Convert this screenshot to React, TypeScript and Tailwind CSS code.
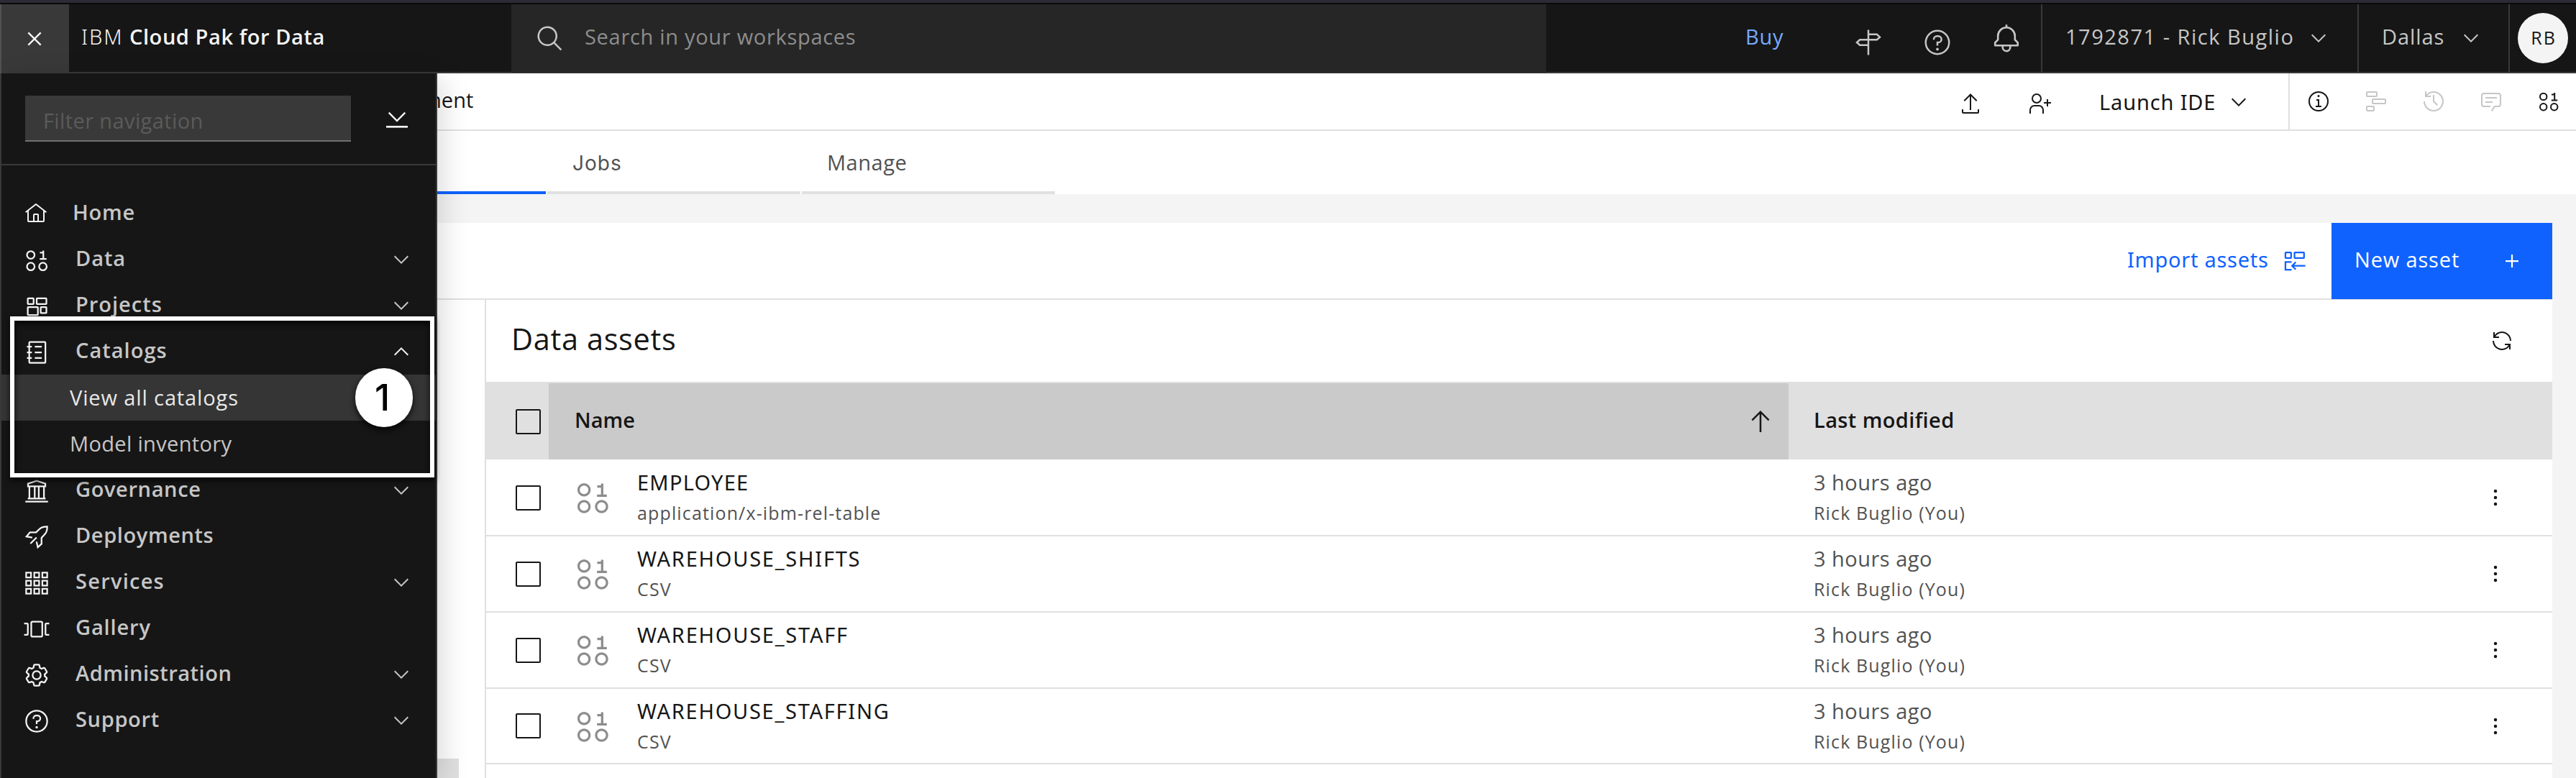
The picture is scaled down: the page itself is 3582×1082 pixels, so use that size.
import type { ReactNode } from "react";

type IconProps = { className?: string; children: ReactNode };

/* 32-unit icon drawn with filled shapes */
const Solid = ({ className = "", children }: IconProps) => (
  <svg viewBox="0 0 32 32" fill="currentColor" className={`shrink-0 ${className}`}>{children}</svg>
);

/* 32-unit icon drawn with 2-unit strokes */
const Line = ({ className = "", children }: IconProps) => (
  <svg viewBox="0 0 32 32" fill="none" stroke="currentColor" strokeWidth="2" className={`shrink-0 ${className}`}>{children}</svg>
);

const ChevronDown = ({ className = "" }: { className?: string }) => (
  <Solid className={`size-[32px] ${className}`}><path d="M16 22 6 12l1.4-1.4 8.6 8.6 8.6-8.6L26 12z" /></Solid>
);
const ChevronUp = ({ className = "" }: { className?: string }) => (
  <Solid className={`size-[32px] ${className}`}><path d="m16 10 10 10-1.4 1.4-8.6-8.6-8.6 8.6L6 20z" /></Solid>
);
const HomeIcon = () => (
  <Solid className="size-[32px]">
    <path d="M16.61 2.21a1.01 1.01 0 0 0-1.24 0L1 13.42l1.24 1.57L4 13.62V26a2 2 0 0 0 2 2H26a2 2 0 0 0 2-2V13.63L29.76 15 31 13.43ZM18 26H14V18h4Zm2 0V18a2 2 0 0 0-2-2H14a2 2 0 0 0-2 2v8H6V12.06l10-7.79 10 7.8V26Z" />
  </Solid>
);
const DataIcon = ({ className = "size-[36px]" }: { className?: string }) => (
  <Line className={className}>
    <circle cx="8.7" cy="9.4" r="4.7" />
    <circle cx="8.7" cy="23.7" r="4.7" />
    <circle cx="23.7" cy="23.7" r="4.7" />
    <path d="M20 6.6h4.4M24.2 4v10.5M19.8 14.4h8.4" />
  </Line>
);
const ProjectsIcon = () => (
  <Line className="size-[36px]">
    <rect x="5" y="6.2" width="7.2" height="7" rx=".6" />
    <rect x="16" y="6.2" width="12" height="7" rx=".6" />
    <rect x="5" y="17" width="12.5" height="9.8" rx=".6" />
    <rect x="21" y="17" width="7" height="7.4" rx=".6" />
  </Line>
);
const CatalogIcon = () => (
  <Line className="size-[36px]">
    <rect x="6.8" y="3.2" width="20" height="25.8" rx="1" />
    <path d="M4 9h6M4 16h6M4 23h6M13.7 9h8.6M13.7 16h8.6M13.7 23h8.6" />
  </Line>
);
const GovernanceIcon = () => (
  <Line className="size-[36px]">
    <path d="M5.3 10V6.8L16 3.2l10.7 3.6V10zM7 10v15M13.6 10v15M18.6 10v15M25 10v15M5 25.2h22M2 29h28" />
  </Line>
);
const RocketIcon = () => (
  <Line className="size-[36px]">
    <path d="M10.5 16.6 3.4 15.3l4.3-5.2h7.6l4.6-4.5C22.4 3.5 25.5 2.9 29 3c.1 3.4-.5 6.6-2.6 9L22 16.9v7.5l-4.6 4.2-1.6-7M15.900 16.400l-7.600 7.600" />
  </Line>
);
const ServicesIcon = () => (
  <Line className="size-[36px]">
    {[3, 13, 23].flatMap((y) => [3, 13, 23].map((x) => <rect key={`${x}-${y}`} x={x} y={y} width="6" height="6" />))}
  </Line>
);
const GalleryIcon = () => (
  <Line className="size-[36px]">
    <rect x="9.3" y="6.8" width="13.6" height="18.5" rx="1.5" />
    <path d="M.5 9h3.600a1 1 0 0 1 1 1v12a1 1 0 0 1-1 1H.5M31.500 9h-3.600a1 1 0 0 0-1 1v12a1 1 0 0 0 1 1h3.600" />
  </Line>
);
const SettingsIcon = () => (
  <Solid className="size-[36px]">
    <path d="M27,16.76c0-.25,0-.5,0-.76s0-.51,0-.77l1.920-1.680A2,2,0,0,0,29.3,11L26.940,7a2,2,0,0,0-1.730-1,2,2,0,0,0-.64.1l-2.430.82a11.350,11.350,0,0,0-1.310-.75l-.51-2.520a2,2,0,0,0-2-1.610H13.640a2,2,0,0,0-2,1.610l-.51,2.520a11.480,11.480,0,0,0-1.320.75L7.430,6.060A2,2,0,0,0,6.790,6,2,2,0,0,0,5.060,7L2.700,11a2,2,0,0,0,.41,2.510L5,15.240c0,.25,0,.5,0,.76s0,.51,0,.77L3.110,18.450A2,2,0,0,0,2.700,21L5.060,25a2,2,0,0,0,1.730,1,2,2,0,0,0,.64-.1l2.430-.82a11.350,11.350,0,0,0,1.310.75l.51,2.520a2,2,0,0,0,2,1.610h4.720a2,2,0,0,0,2-1.610l.51-2.520a11.480,11.480,0,0,0,1.320-.75l2.420.82a2,2,0,0,0,.64.1,2,2,0,0,0,1.730-1L29.300,21a2,2,0,0,0-.41-2.510ZM25.210,24l-3.430-1.160a8.860,8.860,0,0,1-2.710,1.570L18.360,28H13.640l-.71-3.550a9.360,9.360,0,0,1-2.700-1.570L6.790,24,4.430,20l2.720-2.400a8.900,8.900,0,0,1,0-3.130L4.430,12,6.790,8l3.430,1.160a8.860,8.860,0,0,1,2.710-1.570L13.640,4h4.720l.71,3.550a9.360,9.360,0,0,1,2.700,1.570L25.210,8,27.570,12l-2.720,2.400a8.900,8.900,0,0,1,0,3.130L27.570,20Z" />
    <circle cx="16" cy="16" r="5" fill="none" stroke="currentColor" strokeWidth="2" />
  </Solid>
);
const HelpIcon = ({ className = "size-[36px]" }: { className?: string }) => (
  <Solid className={className}>
    <circle cx="16" cy="16" r="13" fill="none" stroke="currentColor" strokeWidth="2" />
    <circle cx="16" cy="23.5" r="1.5" />
    <path d="M17 8h-1.500A4.490 4.490 0 0 0 11 12.500V13h2v-.5a2.500 2.500 0 0 1 2.500-2.500H17a2.500 2.500 0 0 1 0 5h-2v4.500h2V17a4.500 4.500 0 0 0 0-9z" />
  </Solid>
);

type NavItem = { label: string; icon: ReactNode; text: string; row?: string; chevron?: "up" | "down" };

const navTop: NavItem[] = [
  { label: "Data", icon: <DataIcon />, text: "tracking-[0.9px]", chevron: "down" },
  { label: "Projects", icon: <ProjectsIcon />, text: "tracking-[0.99px]", chevron: "down" },
  { label: "Catalogs", icon: <CatalogIcon />, text: "tracking-[1.03px]", row: "mb-[3px]", chevron: "up" },
];
const navBottom: NavItem[] = [
  { label: "Governance", icon: <GovernanceIcon />, text: "tracking-[0.63px]", row: "-mt-[2px]", chevron: "down" },
  { label: "Deployments", icon: <RocketIcon />, text: "tracking-[0.6px]" },
  { label: "Services", icon: <ServicesIcon />, text: "tracking-[1.25px]", chevron: "down" },
  { label: "Gallery", icon: <GalleryIcon />, text: "tracking-[0.87px]" },
  { label: "Administration", icon: <SettingsIcon />, text: "tracking-[0.52px]", chevron: "down" },
  { label: "Support", icon: <HelpIcon />, text: "tracking-[0.66px]", chevron: "down" },
];

function NavRow({ item }: { item: NavItem }) {
  return (
    <div className={`flex h-[64px] items-center pr-[32px] pl-[31px] ${item.row ?? ""}`}>
      <span className="mt-[8px] text-[#f4f4f4]">{item.icon}</span>
      <span className={`mt-[1px] ml-[36px] flex-1 font-semibold ${item.text}`}>{item.label}</span>
      {item.chevron === "down" && <ChevronDown className="mt-[6px]" />}
      {item.chevron === "up" && <ChevronUp className="mt-[6px] text-[#f4f4f4]" />}
    </div>
  );
}

function Header() {
  return (
    <header className="border-t-4 border-[#2b2a35] bg-[#161616] text-[#c6c6c6]">
      <div className="h-[2px] bg-[#0a0a0b]" />
      <div className="flex h-[96px] items-center border-b-2 border-[#393939]">
        <div className="flex h-[96px] w-[96px] items-center justify-center self-start border-l-2 border-[#525252] bg-[#393939] pr-[2px] text-[#f4f4f4]">
          <Solid className="size-[38px]"><path d="M17.410 16 24 9.410 22.590 8 16 14.590 9.410 8 8 9.410 14.590 16 8 22.590 9.410 24 16 17.410 22.590 24 24 22.590z" /></Solid>
        </div>
        <div className="-mt-[5px] flex w-[615px] pl-[17px] text-[#f4f4f4]">
          <span className="w-[67px] font-['Noto_Sans'] font-light tracking-[2px]">IBM</span>
          <span className="font-semibold tracking-[0.57px]">Cloud Pak for Data</span>
        </div>
        <div className="flex h-[95px] w-[1439px] items-center self-start bg-[#262626] pl-[34px]">
          <Solid className="size-[40px]"><path d="M29 27.590l-7.550-7.560a11.020 11.020 0 1 0-1.410 1.410L27.590 29ZM4 13a9 9 0 1 1 9 9A9.010 9.010 0 0 1 4 13Z" /></Solid>
          <span className="-mt-[6px] ml-[28px] tracking-[0.7px] text-[#8d8d8d]">Search in your workspaces</span>
        </div>
        <span className="-mt-[5px] ml-[277px] w-[151px] tracking-[0.7px] text-[#78a9ff]">Buy</span>
        <Line className="mt-[12px] size-[40px]"><path d="M16 2v28M16 7h9.500l3.300 3.100L25.500 13H6.500L3.200 16l3.300 3H16" /></Line>
        <HelpIcon className="mt-[12px] ml-[56px] size-[40px]" />
        <Solid className="mt-[2px] ml-[55px] size-[42px]">
          <path d="M28.707 19.293 26 16.586V13a10.014 10.014 0 0 0-9-9.949V1H15V3.051A10.014 10.014 0 0 0 6 13v3.586L3.293 19.293A1 1 0 0 0 3 20v3a1 1 0 0 0 1 1h7v.777a5.152 5.152 0 0 0 4.500 5.199A5.006 5.006 0 0 0 21 25V24h7a1 1 0 0 0 1-1V20A1 1 0 0 0 28.707 19.293ZM19 25a3 3 0 0 1-6 0V24h6Zm8-3H5V20.414L7.707 17.707A1 1 0 0 0 8 17V13a8 8 0 0 1 16 0v4a1 1 0 0 0 .293.707L27 20.414Z" />
        </Solid>
        <div className="ml-[27px] flex h-full w-[440px] items-center justify-between border-l-2 border-[#393939] pr-[38px] pl-[32px]">
          <span className="-mt-[5px] tracking-[1.51px]">1792871 - Rick Buglio</span>
          <ChevronDown />
        </div>
        <div className="flex h-full w-[210px] items-center justify-between border-l-2 border-[#393939] pr-[36px] pl-[32px]">
          <span className="-mt-[5px] tracking-[0.94px]">Dallas</span>
          <ChevronDown />
        </div>
        <div className="flex h-full flex-1 items-center border-l-2 border-[#393939] pl-[11px]">
          <div className="flex size-[70px] items-center justify-center rounded-full bg-[#f4f4f4] pb-[3px] pl-[2px] text-[25px] tracking-[2px] text-[#161616]">RB</div>
        </div>
      </div>
    </header>
  );
}

function Sidebar() {
  return (
    <aside className="relative z-10 w-[608px] shrink-0 border-x-2 border-[#393939] bg-[#161616] text-[#c6c6c6] shadow-[8px_8px_36px_rgba(0,0,0,0.14)]">
      <div className="flex h-[128px] items-start border-b-2 border-[#393939] pt-[31px] pl-[33px]">
        <div className="flex h-[64px] w-[453px] items-center border-b-2 border-[#6f6f6f] bg-[#393939] pt-[7px] pl-[25px] tracking-[0.39px] text-[#5b5b5b]">Filter navigation</div>
        <svg viewBox="0 0 32 32" fill="none" stroke="#f4f4f4" className="mt-[17px] ml-[48px] size-[32px]">
          <path d="M4.700 6.700 16 18 27.300 6.700" strokeWidth="2.400" />
          <path d="M1 26.300h30" strokeWidth="2.700" />
        </svg>
      </div>
      <nav className="pt-[32px]">
        <div className="flex h-[64px] items-center pl-[32px]">
          <span className="mt-[6px] text-[#f4f4f4]"><HomeIcon /></span>
          <span className="mt-[1px] ml-[35px] font-semibold tracking-[0.79px]">Home</span>
        </div>
        {navTop.map((item) => <NavRow key={item.label} item={item} />)}
        <div className="flex h-[64px] items-center bg-[#353535] pl-[95px] tracking-[0.88px] text-[#e8e8e8]">View all catalogs</div>
        <div className="flex h-[64px] items-center pl-[95px] tracking-[0.34px]">Model inventory</div>
        {navBottom.map((item) => <NavRow key={item.label} item={item} />)}
      </nav>
      <div className="absolute top-[338px] left-[12px] h-[224px] w-[590px] border-[6px] border-white shadow-[0_4px_8px_rgba(0,0,0,0.8),inset_0_4px_8px_rgba(0,0,0,0.8)]" />
      <div className="absolute top-[410px] left-[492px] flex h-[82px] w-[80px] items-center justify-center rounded-full bg-white pr-[5px] font-[Inter] text-[51px] font-medium text-black shadow-[0_4px_8px_rgba(0,0,0,0.8)]">1</div>
    </aside>
  );
}

function Toolbar() {
  return (
    <div className="flex h-[80px] items-center border-b-2 border-[#e0e0e0] text-[#161616]">
      <span className="-mt-[4px] -ml-[21px] w-[2137px]">ment</span>
      <Line className="mt-[6px] size-[32px]"><path d="M16 25V3.500M7.300 12.200 16 3.500l8.700 8.700M5 24v4a1 1 0 0 0 1 1h20a1 1 0 0 0 1-1v-4" /></Line>
      <Line className="mt-[6px] ml-[64px] size-[32px]">
        <circle cx="12" cy="9" r="6" />
        <path d="M3 30v-5a6 6 0 0 1 6-6h6a6 6 0 0 1 6 6v5M27 10v10M22 15h10" />
      </Line>
      <span className="mt-[2px] ml-[67px] w-[178px] font-['Noto_Sans'] tracking-[0.85px]">Launch IDE</span>
      <ChevronDown className="mt-[2px]" />
      <div className="ml-[53px] flex h-full flex-1 items-center gap-[48px] border-l-2 border-[#e0e0e0] pl-[24px] text-[#c6c6c6]">
        <Solid className="size-[32px] text-[#161616]">
          <circle cx="16" cy="16" r="13" fill="none" stroke="currentColor" strokeWidth="2" />
          <circle cx="16" cy="8.600" r="1.500" />
          <path d="M17 22v-9h-4v2h2v7h-3v2h8v-2z" />
        </Solid>
        <Line className="size-[32px]">
          <rect x="3" y="3" width="14" height="6" rx="1" />
          <rect x="11" y="13" width="18" height="6" rx="1" />
          <rect x="3" y="23" width="10" height="6" rx="1" />
        </Line>
        <Solid className="size-[32px]">
          <path d="M20.590 22 15 16.410V7h2v8.580l5 5.010z" />
          <path d="M16 2A13.940 13.940 0 0 0 6 6.230V2H4v8h8V8H7.080A12 12 0 1 1 4 16H2A14 14 0 1 0 16 2Z" />
        </Solid>
        <Solid className="size-[32px]">
          <path d="M17.740 30 16 29l4-7h6a2 2 0 0 0 2-2V8a2 2 0 0 0-2-2H6a2 2 0 0 0-2 2v12a2 2 0 0 0 2 2h9v2H6a4 4 0 0 1-4-4V8a4 4 0 0 1 4-4h20a4 4 0 0 1 4 4v12a4 4 0 0 1-4 4h-4.840z" />
          <path d="M8 10h16v2H8zM8 16h10v2H8z" />
        </Solid>
        <DataIcon className="size-[32px] text-[#161616]" />
      </div>
    </div>
  );
}

function Tabs() {
  return (
    <div className="flex h-[88px] gap-[2px] text-[#525252]">
      <div className="w-[151px] border-b-4 border-[#0f62fe]" />
      <div className="flex w-[352px] items-center border-b-4 border-[#e0e0e0] pt-[5px] pl-[35px] font-[Inter] text-[28px] tracking-[1.03px]">Jobs</div>
      <div className="flex w-[352px] items-center border-b-4 border-[#e0e0e0] pt-[3px] pl-[35px] tracking-[0.53px]">Manage</div>
    </div>
  );
}

const assets = [
  { name: "EMPLOYEE", kind: "application/x-ibm-rel-table", tracking: "tracking-[1.23px]", row: "mt-[1px] h-[106px]" },
  { name: "WAREHOUSE_SHIFTS", kind: "CSV", tracking: "tracking-[1.76px]", row: "h-[106px]" },
  { name: "WAREHOUSE_STAFF", kind: "CSV", tracking: "tracking-[1.76px]", row: "h-[106px]" },
  { name: "WAREHOUSE_STAFFING", kind: "CSV", tracking: "tracking-[1.73px]", row: "h-[105px]" },
];

const Checkbox = () => <div className="size-[35px] rounded-[2px] border-2 border-[#161616]" />;

function AssetTable() {
  return (
    <section className="flex-1 border-l-2 border-[#e0e0e0]">
      <div className="flex h-[114px] items-center justify-between pr-[54px] pl-[35px] text-[#161616]">
        <h1 className="-mt-[6px] text-[41.5px] tracking-[0.64px]">Data assets</h1>
        <Solid className="size-[32px]">
          <path d="M12 10H6.780A11 11 0 0 1 27 16h2A13 13 0 0 0 6 7.680V4H4v8h8ZM20 22h5.220A11 11 0 0 1 5 16H3a13 13 0 0 0 23 8.320V28h2V20H20Z" />
        </Solid>
      </div>
      <div className="flex h-[108px] border-t-2 border-[#e0e0e0] bg-[#e0e0e0] font-semibold text-[#161616]">
        <div className="flex w-[87px] items-center pl-[41px]"><Checkbox /></div>
        <div className="flex w-[1724px] items-center justify-between bg-[#cacaca] pr-[19px] pl-[36px]">
          <span className="-mt-[4px]">Name</span>
          <Solid className="size-[40px]"><path d="M16 4 6 14l1.410 1.410L15 7.830V28h2V7.830l7.590 7.580L26 14z" /></Solid>
        </div>
        <span className="flex items-center pb-[4px] pl-[35px] tracking-[0.39px]">Last modified</span>
      </div>
      {assets.map((asset) => (
        <div key={asset.name} className={`flex border-b-2 border-[#e0e0e0] leading-[42px] text-[#525252] ${asset.row}`}>
          <div className="flex w-[87px] items-center pl-[41px]"><Checkbox /></div>
          <div className="flex w-[1724px] items-center pl-[35px]">
            <DataIcon className="size-[52px] text-[#8d8d8d]" />
            <div className="ml-[36px]">
              <div className={`font-['Noto_Sans'] text-[#161616] ${asset.tracking}`}>{asset.name}</div>
              <div className="text-[25px] tracking-[1.14px]">{asset.kind}</div>
            </div>
          </div>
          <div className="flex flex-1 flex-col justify-center pl-[35px]">
            <div className="tracking-[0.48px]">3 hours ago</div>
            <div className="text-[25px] tracking-[1.14px]">Rick Buglio (You)</div>
          </div>
          <div className="flex items-center pr-[61px] text-[#161616]">
            <Solid className="size-[36px]">
              <circle cx="16" cy="8" r="2" /><circle cx="16" cy="16" r="2" /><circle cx="16" cy="24" r="2" />
            </Solid>
          </div>
        </div>
      ))}
    </section>
  );
}

export default function App() {
  return (
    <div className="flex h-[1082px] w-[3582px] flex-col overflow-hidden bg-[#f4f4f4] font-['Open_Sans'] text-[29px] leading-[40px] whitespace-nowrap">
      <Header />
      <div className="flex min-h-0 flex-1">
        <Sidebar />
        <main className="flex min-w-0 flex-1 flex-col">
          <div className="bg-white">
            <Toolbar />
            <Tabs />
          </div>
          <div className="mt-[40px] mr-[33px] flex min-h-0 flex-1 flex-col bg-white">
            <div className="flex h-[107px] shrink-0 items-start justify-end border-b-2 border-[#e0e0e0]">
              <div className="flex h-[105px] w-[284px] items-center text-[#0f62fe]">
                <span className="-mt-[4px] w-[215px] font-['Noto_Sans'] tracking-[0.73px]">Import assets</span>
                <Line className="size-[36px]">
                  <rect x="4.400" y="5.400" width="7" height="7" rx=".6" />
                  <rect x="15.600" y="5.400" width="11.800" height="7" rx=".6" />
                  <path d="M12 17.300H4.400v9.500H12M29 21.900H13.200M17.200 17.300l-4.600 4.600 4.600 4.600" />
                </Line>
              </div>
              <button className="flex h-[106px] w-[307px] items-center justify-between bg-[#0f62fe] pr-[38px] pl-[32px] text-white">
                <span className="-mt-[5px] tracking-[0.84px]">New asset</span>
                <Solid className="size-[36px]"><path d="M17 15V8h-2v7H8v2h7v7h2v-7h7v-2z" /></Solid>
              </button>
            </div>
            <div className="flex min-h-0 flex-1">
              <div className="flex w-[66px] items-end">
                <div className="h-[27px] w-[30px] bg-[#e0e0e0]" />
              </div>
              <AssetTable />
            </div>
          </div>
        </main>
      </div>
    </div>
  );
}
